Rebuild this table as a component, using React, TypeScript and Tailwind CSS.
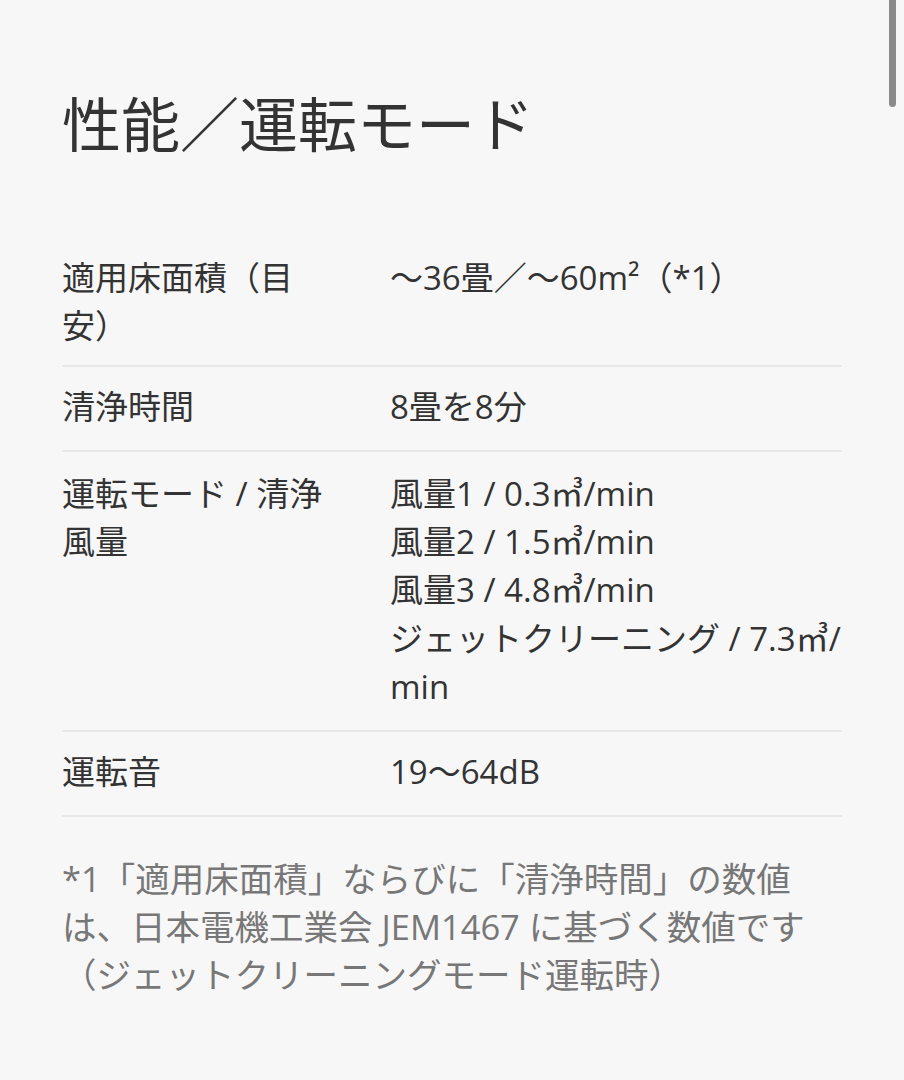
import React from "react";

const rows: { label: string[]; value: React.ReactNode[]; pad: string }[] = [
  {
    label: ["適用床面積（目", "安）"],
    value: [<>～36畳／～60m²（*1）</>],
    pad: "pt-[16px] pb-[14px]",
  },
  { label: ["清浄時間"], value: ["8畳を8分"], pad: "pt-[16px] pb-[19px]" },
  {
    label: ["運転モード / 清浄", "風量"],
    value: [
      "風量1 / 0.3㎥/min",
      "風量2 / 1.5㎥/min",
      "風量3 / 4.8㎥/min",
      "ジェットクリーニング / 7.3㎥/",
      "min",
    ],
    pad: "pt-[18px] pb-[19px]",
  },
  { label: ["運転音"], value: ["19～64dB"], pad: "pt-[16px] pb-[19px]" },
];

export default function App() {
  return (
    <div className="relative min-h-screen bg-[#f7f7f7] px-[62px] pt-[84px] pb-[60px] font-['Open_Sans','Noto_Sans_CJK_JP',sans-serif] text-[#333]">
      <div className="absolute right-[8px] top-0 h-[107px] w-[7px] rounded-b-full bg-[#8a8a8a]" />
      <h2 className="text-[59px] leading-[80px] font-normal whitespace-nowrap">
        性能／運転モード
      </h2>
      <div className="mt-[74px] flex flex-col">
        {rows.map((r, i) => (
          <div
            key={i}
            className={`grid grid-cols-[328px_1fr] border-b-2 border-[#e8e8e8] text-[33px] leading-[48.25px] ${r.pad}`}
          >
            <div className="whitespace-nowrap">
              {r.label.map((l, j) => (
                <div key={j}>{l}</div>
              ))}
            </div>
            <div className="whitespace-nowrap">
              {r.value.map((v, j) => (
                <div key={j}>{v}</div>
              ))}
            </div>
          </div>
        ))}
      </div>
      <div className="mt-[38px] text-[34.5px] leading-[48px] text-[#777] whitespace-nowrap">
        <div>*1「適用床面積」ならびに「清浄時間」の数値</div>
        <div>は、日本電機工業会 JEM1467 に基づく数値です</div>
        <div>（ジェットクリーニングモード運転時）</div>
      </div>
    </div>
  );
}
